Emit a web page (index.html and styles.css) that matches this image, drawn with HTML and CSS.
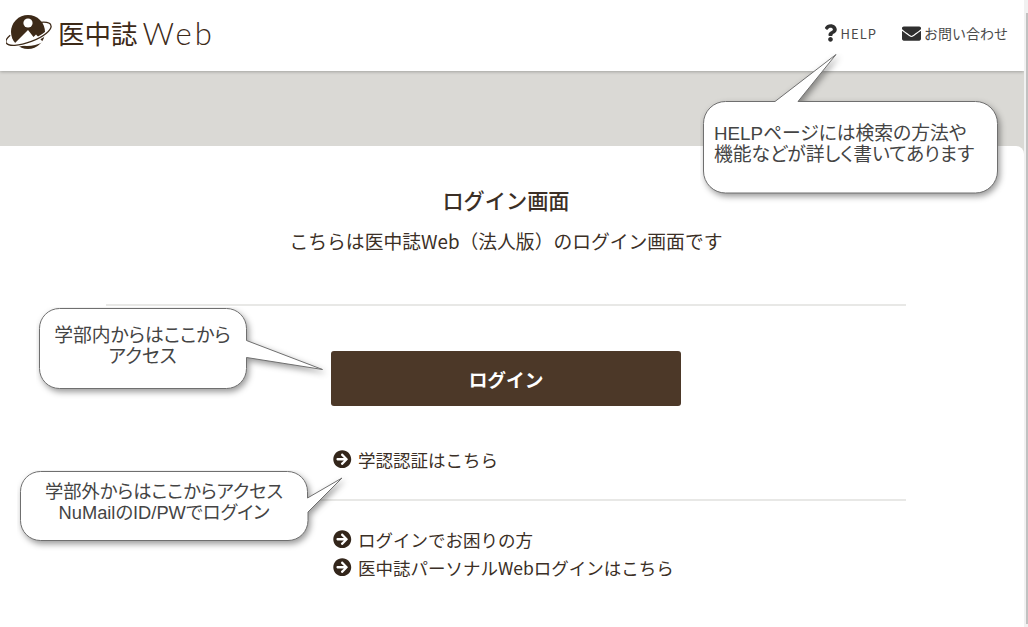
FILE: index.html
```html
<!DOCTYPE html>
<html lang="ja">
<head>
    <meta charset="UTF-8">
    <meta name="viewport" content="width=device-width, initial-scale=1.0">
    <link rel="stylesheet" href="styles.css">
    <title>医中誌Web ログイン</title>
</head>
<body>
    <header class="site-header">
        <a class="logo" href="#">
            <svg class="logo-mark" viewBox="0 0 46 38" width="46" height="38">
                <circle cx="22" cy="18" r="17" fill="#3d2a18"/>
                <circle cx="22" cy="9" r="4.6" fill="#fff"/>
                <path d="M8 30 L22 16 L27.5 23 L30 20.5 L37 28 Q24 35 8 30Z" fill="#fff"/>
                <g transform="rotate(-21 22.5 20)" fill="none">
                    <path d="M-1.5 20 A24 8 0 0 0 46.5 20" stroke="#fff" stroke-width="3.5"/>
                    <path d="M-1.5 20 A24 8 0 0 0 46.5 20 A24 8 0 0 0 38 13.5" stroke="#3d2a18" stroke-width="1.3"/>
                    <path d="M-1.5 20 A24 8 0 0 1 5 14.5" stroke="#3d2a18" stroke-width="1.3"/>
                </g>
            </svg>
            <span class="logo-jp">医中誌</span><span class="logo-en">Web</span>
        </a>
        <nav class="header-nav">
            <a href="#">
                <svg class="icon-help" viewBox="0 0 384 512"><path d="M202.021 0C122.202 0 70.503 32.703 29.914 91.026c-7.363 10.58-5.093 25.086 5.178 32.874l43.138 32.709c10.373 7.865 25.132 6.026 33.253-4.148 25.049-31.381 43.63-49.449 82.757-49.449 30.764 0 68.816 19.799 68.816 49.631 0 22.552-18.617 34.134-48.993 51.164-35.423 19.86-82.299 44.576-82.299 106.405V320c0 13.255 10.745 24 24 24h72.471c13.255 0 24-10.745 24-24v-5.773c0-42.86 125.268-44.645 125.268-160.627C377.504 66.256 286.902 0 202.021 0zM192 373.459c-38.196 0-69.271 31.075-69.271 69.271 0 38.195 31.075 69.27 69.271 69.27s69.271-31.075 69.271-69.271-31.075-69.27-69.271-69.27z"/></svg>
                <span class="nav-latin">HELP</span>
            </a>
            <a href="#">
                <svg class="icon-mail" viewBox="0 0 512 512"><path d="M502.3 190.8c3.9-3.1 9.7-.2 9.7 4.7V400c0 26.5-21.5 48-48 48H48c-26.5 0-48-21.5-48-48V195.6c0-5 5.7-7.8 9.7-4.7 22.4 17.4 52.1 39.5 154.1 113.6 21.1 15.4 56.7 47.8 92.2 47.6 35.7.3 72-32.8 92.3-47.6 102-74.1 131.6-96.3 154-113.7zM256 320c23.2.4 56.6-29.2 73.4-41.4 132.7-96.3 142.8-104.7 173.4-128.7 5.8-4.5 9.2-11.5 9.2-18.9v-19c0-26.5-21.5-48-48-48H48C21.5 64 0 85.5 0 112v19c0 7.4 3.4 14.3 9.2 18.9 30.6 23.9 40.7 32.4 173.4 128.7 16.8 12.2 50.2 41.8 73.4 41.4z"/></svg>
                お問い合わせ
            </a>
        </nav>
    </header>

    <div class="band"></div>

    <main class="card">
        <h1 class="title">ログイン画面</h1>
        <p class="lead">こちらは医中誌Web（法人版）のログイン画面です</p>

        <section class="login-box">
            <button class="login-button">ログイン</button>
            <ul class="links links-first">
                <li>
                    <svg class="icon-arrow" viewBox="0 0 512 512"><path d="M256 8c137 0 248 111 248 248S393 504 256 504 8 393 8 256 119 8 256 8zm-28.9 143.6l75.5 72.4H120c-13.3 0-24 10.7-24 24v16c0 13.3 10.7 24 24 24h182.6l-75.5 72.4c-9.7 9.3-9.9 24.8-.4 34.3l11 10.9c9.4 9.4 24.6 9.4 33.9 0L404.3 273c9.4-9.4 9.4-24.6 0-33.9L271.6 106.3c-9.4-9.4-24.6-9.4-33.9 0l-11 10.9c-9.3 9.6-9.1 25.1.4 34.4z"/></svg>
                    <a href="#">学認認証はこちら</a>
                </li>
            </ul>
        </section>

        <section class="help-box">
            <ul class="links">
                <li>
                    <svg class="icon-arrow" viewBox="0 0 512 512"><path d="M256 8c137 0 248 111 248 248S393 504 256 504 8 393 8 256 119 8 256 8zm-28.9 143.6l75.5 72.4H120c-13.3 0-24 10.7-24 24v16c0 13.3 10.7 24 24 24h182.6l-75.5 72.4c-9.7 9.3-9.9 24.8-.4 34.3l11 10.9c9.4 9.4 24.6 9.4 33.9 0L404.3 273c9.4-9.4 9.4-24.6 0-33.9L271.6 106.3c-9.4-9.4-24.6-9.4-33.9 0l-11 10.9c-9.3 9.6-9.1 25.1.4 34.4z"/></svg>
                    <a href="#">ログインでお困りの方</a>
                </li>
                <li>
                    <svg class="icon-arrow" viewBox="0 0 512 512"><path d="M256 8c137 0 248 111 248 248S393 504 256 504 8 393 8 256 119 8 256 8zm-28.9 143.6l75.5 72.4H120c-13.3 0-24 10.7-24 24v16c0 13.3 10.7 24 24 24h182.6l-75.5 72.4c-9.7 9.3-9.9 24.8-.4 34.3l11 10.9c9.4 9.4 24.6 9.4 33.9 0L404.3 273c9.4-9.4 9.4-24.6 0-33.9L271.6 106.3c-9.4-9.4-24.6-9.4-33.9 0l-11 10.9c-9.3 9.6-9.1 25.1.4 34.4z"/></svg>
                    <a href="#">医中誌パーソナルWebログインはこちら</a>
                </li>
            </ul>
        </section>
    </main>

    <div class="scroll-track"><div class="scroll-thumb"></div></div>

    <!-- callouts pasted over the page -->
    <div class="callout callout-help">
        <svg class="callout-shape" width="320" height="160" viewBox="0 0 320 160">
            <path d="M25.5 48.5 H75 L136 1.5 L98 48.5 H275.5 a22 22 0 0 1 22 22 V118 a22 22 0 0 1 -22 22 H25.5 a22 22 0 0 1 -22 -22 V70.5 a22 22 0 0 1 22 -22Z"/>
        </svg>
        <p class="callout-text">HELPページには検索の方法や<br>機能などが詳しく書いてあります</p>
    </div>
    <div class="callout callout-inside">
        <svg class="callout-shape" width="300" height="100" viewBox="0 0 300 100">
            <path d="M23.5 1.5 H190.5 a20 20 0 0 1 20 20 V33.5 L286.5 62.5 L210.5 50.5 V61.5 a20 20 0 0 1 -20 20 H23.5 a20 20 0 0 1 -20 -20 V21.5 a20 20 0 0 1 20 -20Z"/>
        </svg>
        <p class="callout-text">学部内からはここから<br>アクセス</p>
    </div>
    <div class="callout callout-outside">
        <svg class="callout-shape" width="340" height="90" viewBox="0 0 340 90">
            <path d="M23.5 1.5 H270.5 a20 20 0 0 1 20 20 V28 L325 8 L291 42 V50.5 a20 20 0 0 1 -20 20 H23.5 a20 20 0 0 1 -20 -20 V21.5 a20 20 0 0 1 20 -20Z"/>
        </svg>
        <p class="callout-text">学部外からはここからアクセス<br>NuMailのID/PWでログイン</p>
    </div>
</body>
</html>
```

FILE: styles.css
```css
* {
    box-sizing: border-box;
}

html, body {
    height: 100%;
}

body {
    margin: 0;
    overflow: hidden;
    position: relative;
    background-color: #dad9d5;
    color: #3b2f26;
    font-family: "Noto Sans CJK JP", "Noto Sans", sans-serif;
}

a {
    color: inherit;
    text-decoration: none;
}

ul {
    list-style: none;
    margin: 0;
    padding: 0;
}

.site-header {
    position: relative;
    display: flex;
    justify-content: space-between;
    align-items: center;
    height: 71px;
    margin-right: 4px;
    padding: 0 16px 5px 6px;
    background-color: #fff;
    box-shadow: 0 1px 3px rgba(0, 0, 0, 0.25);
}

.logo {
    display: flex;
    align-items: center;
    color: #3d2a18;
}

.logo-mark {
    margin-right: 6px;
}

.logo-jp {
    font-size: 26.5px;
    line-height: 1;
}

.logo-en {
    margin-left: 5px;
    font-family: "Lato", sans-serif;
    font-weight: 300;
    font-size: 31px;
    letter-spacing: 3px;
    line-height: 1;
}

.header-nav {
    display: flex;
    gap: 25px;
    font-size: 14px;
    color: #4a4a4a;
}

.header-nav a {
    display: flex;
    align-items: center;
    gap: 3px;
}

.nav-latin {
    margin-left: 1px;
    font-size: 13px;
    letter-spacing: 1px;
}

.header-nav svg {
    fill: #2f2f2f;
}

.icon-help {
    width: 13px;
    height: 18px;
}

.icon-mail {
    width: 19px;
    height: 19px;
}

.band {
    height: 75px;
    margin-right: 4px;
}

.card {
    height: 481px;
    margin-right: 4px;
    padding: 40px 12px 0 0;
    background-color: #fff;
    border-radius: 0 8px 0 0;
    text-align: center;
}

.title {
    margin: 0;
    font-size: 21.2px;
    font-weight: 500;
    line-height: 27px;
}

.lead {
    margin: 14px 0 0;
    font-size: 18.8px;
    line-height: 27px;
}

.login-box {
    width: 800px;
    margin: 50px auto 0;
    padding: 45px 0 26px;
    border-top: 2px solid #e8e8e6;
    border-bottom: 2px solid #e8e8e6;
}

.login-button {
    display: block;
    width: 350px;
    height: 55px;
    margin: 0 auto;
    border: none;
    border-radius: 3px;
    background-color: #4c3828;
    color: #fff;
    font-family: inherit;
    font-size: 18.7px;
    font-weight: 700;
}

.links {
    width: 350px;
    margin: 0 auto;
    text-align: left;
    font-size: 17.5px;
}

.links-first {
    margin-top: 39px;
}

.links li {
    display: flex;
    align-items: center;
    gap: 6.5px;
    height: 28px;
    padding-left: 2px;
}

.icon-arrow {
    width: 18.5px;
    height: 18.5px;
    fill: #33261b;
}

.help-box {
    padding-top: 24px;
}

.scroll-track {
    position: absolute;
    top: 0;
    right: 0;
    bottom: 0;
    width: 4px;
    padding: 13px 0 3px 2px;
    background-color: #f1f1f1;
}

.scroll-thumb {
    height: 100%;
    background-color: #c1c1c1;
}

.callout {
    position: absolute;
}

.callout-shape {
    display: block;
}

.callout-shape path {
    fill: #fff;
    stroke: #6f6f6f;
    stroke-width: 1;
    filter: drop-shadow(2px 3px 3px rgba(0, 0, 0, 0.4));
}

.callout-text {
    position: absolute;
    margin: 0;
    color: #444;
    font-family: "Liberation Sans", "Noto Sans CJK JP", sans-serif;
    font-size: 18.5px;
    font-feature-settings: "palt";
    line-height: 21px;
    white-space: nowrap;
}

.callout-help {
    left: 700px;
    top: 53px;
}

.callout-help .callout-text {
    left: 14px;
    top: 70px;
    font-size: 18.8px;
}

.callout-inside {
    left: 36px;
    top: 307px;
}

.callout-inside .callout-text {
    left: 3px;
    width: 207px;
    top: 18px;
    font-size: 18.8px;
    text-align: center;
}

.callout-outside {
    left: 17px;
    top: 470px;
}

.callout-outside .callout-text {
    left: 3px;
    width: 288px;
    top: 11px;
    font-size: 18.3px;
    text-align: center;
}
```
